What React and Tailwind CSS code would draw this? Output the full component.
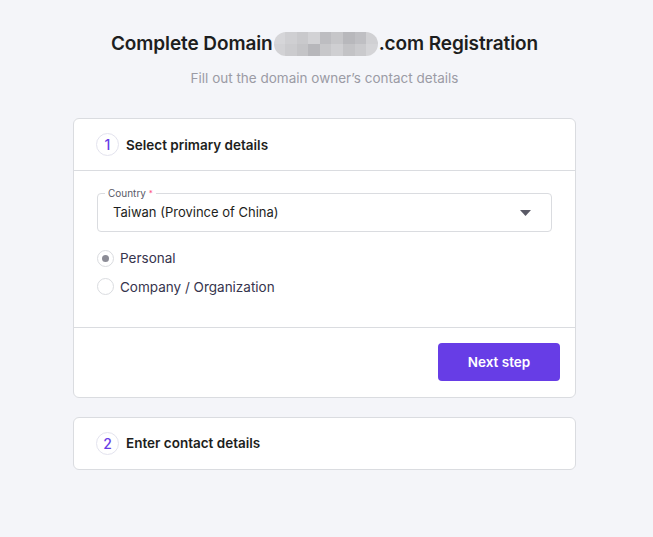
const blurTop = ['#d6d6d9', '#cfcfd2', '#c9c9cc', '#d2d2d5', '#bdbdc1', '#c6c6c9', '#b8b8bc', '#bfbfc3', '#d0d0d3'];
const blurBottom = ['#d2d2d5', '#cbcbce', '#c4c4c7', '#b7b7bb', '#c7c7ca', '#cfcfd2', '#c3c3c6', '#cacacd', '#d4d4d7'];

function Blur() {
  return (
    <span className="inline-flex flex-col w-[104px] h-[24px] rounded-full overflow-hidden align-middle mx-[1px]">
      <span className="flex flex-1">
        {blurTop.map((c, i) => (
          <span key={i} className="flex-1" style={{ background: c }} />
        ))}
      </span>
      <span className="flex flex-1">
        {blurBottom.map((c, i) => (
          <span key={i} className="flex-1" style={{ background: c }} />
        ))}
      </span>
    </span>
  );
}

function StepBadge({ n }) {
  return (
    <span className="w-[23px] h-[23px] rounded-full border border-[#e3e3ee] flex items-center justify-center text-[14px] font-medium text-[#673de6]">
      {n}
    </span>
  );
}

export default function App() {
  return (
    <div className="min-h-screen bg-[#f4f5f9] font-['Inter',sans-serif] text-[#2f1c6a]">
      <div className="w-[503px] ml-[73px] pt-[32px]">
        {/* Заголовок */}
        <h1 className="flex items-center justify-center text-[19px] font-semibold text-[#1d1e20] tracking-[-0.1px] h-[24px]">
          Complete Domain<Blur />.com Registration
        </h1>
        <p className="text-center text-[13.5px] text-[#9b9ba5] mt-[12px]">
          Fill out the domain owner’s contact details
        </p>

        {/* Шаг 1 */}
        <div className="mt-[30px] bg-white border border-[#dadce0] rounded-[6px]">
          <div className="h-[52px] flex items-center gap-[7px] px-[22px] border-b border-[#dadce0]">
            <StepBadge n="1" />
            <span className="text-[13.5px] font-semibold text-[#1d1e20]">Select primary details</span>
          </div>

          <div className="px-[23px] pt-[22px] pb-[30px]">
            <div className="relative h-[39px] border border-[#dadce0] rounded-[4px] flex items-center pl-[15px] pr-[20px]">
              <span className="absolute -top-[7px] left-[7px] bg-white px-[3px] text-[10px] leading-[12px] text-[#5a5a66]">
                Country <span className="text-[#fc5185] align-top text-[8px]">*</span>
              </span>
              <span className="flex-1 text-[13px] text-[#1d1e20]">Taiwan (Province of China)</span>
              <svg width="11" height="6" viewBox="0 0 11 6" className="text-[#5a5a66]">
                <path d="M0 0h11L5.5 6z" fill="currentColor" />
              </svg>
            </div>

            <div className="mt-[16px] flex flex-col gap-[8px]">
              <label className="flex items-center gap-[6px] text-[13.5px] text-[#36344d]">
                <span className="w-[17px] h-[17px] rounded-full border border-[#dadce0] flex items-center justify-center">
                  <span className="w-[7px] h-[7px] rounded-full bg-[#8c8c96]" />
                </span>
                Personal
              </label>
              <label className="flex items-center gap-[6px] text-[13.5px] text-[#36344d]">
                <span className="w-[17px] h-[17px] rounded-full border border-[#dadce0]" />
                Company / Organization
              </label>
            </div>
          </div>

          <div className="border-t border-[#dadce0] h-[70px] flex items-center justify-end px-[15px]">
            <button className="w-[122px] h-[38px] rounded-[4px] bg-[#673de6] text-white text-[13.5px] font-semibold">
              Next step
            </button>
          </div>
        </div>

        {/* Шаг 2 */}
        <div className="mt-[19px] bg-white border border-[#dadce0] rounded-[6px] h-[53px] flex items-center gap-[7px] px-[22px]">
          <StepBadge n="2" />
          <span className="text-[13.5px] font-semibold text-[#1d1e20]">Enter contact details</span>
        </div>
      </div>
    </div>
  );
}
